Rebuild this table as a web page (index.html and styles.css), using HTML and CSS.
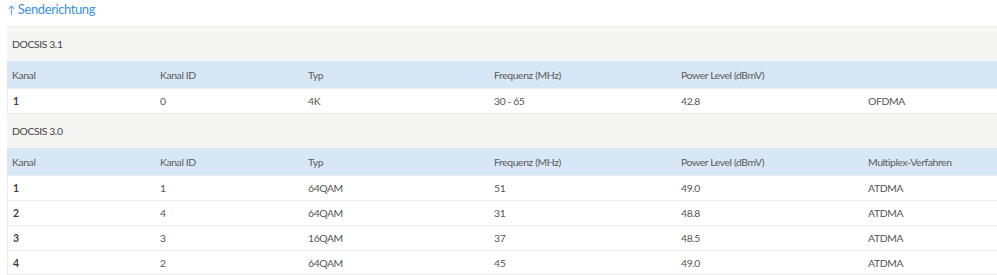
FILE: index.html
```html
<!DOCTYPE html>
<html lang="de">
<head>
<meta charset="utf-8">
<title>Senderichtung</title>
<link rel="stylesheet" href="styles.css">
</head>
<body>
<h2 class="section-title"><span class="arrow">↑</span>Senderichtung</h2>
<table class="channels">
  <colgroup>
    <col class="c1"><col class="c2"><col class="c3"><col class="c4"><col class="c5"><col class="c6">
  </colgroup>
  <tbody>
    <tr class="group"><td colspan="6">DOCSIS 3.1</td></tr>
    <tr class="head"><td>Kanal</td><td>Kanal ID</td><td>Typ</td><td>Frequenz (MHz)</td><td>Power Level (dBmV)</td><td></td></tr>
    <tr class="row"><td class="num">1</td><td>0</td><td>4K</td><td>30 - 65</td><td>42.8</td><td>OFDMA</td></tr>
    <tr class="group"><td colspan="6">DOCSIS 3.0</td></tr>
    <tr class="head"><td>Kanal</td><td>Kanal ID</td><td>Typ</td><td>Frequenz (MHz)</td><td>Power Level (dBmV)</td><td>Multiplex-Verfahren</td></tr>
    <tr class="row"><td class="num">1</td><td>1</td><td>64QAM</td><td>51</td><td>49.0</td><td>ATDMA</td></tr>
    <tr class="row"><td class="num">2</td><td>4</td><td>64QAM</td><td>31</td><td>48.8</td><td>ATDMA</td></tr>
    <tr class="row"><td class="num">3</td><td>3</td><td>16QAM</td><td>37</td><td>48.5</td><td>ATDMA</td></tr>
    <tr class="row"><td class="num">4</td><td>2</td><td>64QAM</td><td>45</td><td>49.0</td><td>ATDMA</td></tr>
  </tbody>
</table>
</body>
</html>
```
FILE: styles.css
```css
html, body {
  margin: 0;
  padding: 0;
  background: #ffffff;
}
body {
  font-family: Lato, "Liberation Sans", sans-serif;
  color: #555555;
  overflow: hidden;
}
.section-title {
  margin: 0;
  padding: 0 0 0 7px;
  height: 26px;
  box-sizing: border-box;
  font-family: Lato, Roboto, sans-serif;
  font-size: 13px;
  font-weight: normal;
  color: #3d8fe0;
  line-height: 18px;
  letter-spacing: -0.4px;
}
.section-title .arrow {
  display: inline-block;
  margin-right: 3px;
  font-size: 11px;
}
.channels {
  margin-left: 7px;
  width: 990px;
  border-collapse: separate;
  border-spacing: 0;
  table-layout: fixed;
  font-size: 10.4px;
  letter-spacing: -0.4px;
}
.c1 { width: 148px; }
.c2 { width: 148px; }
.c3 { width: 186px; }
.c4 { width: 187px; }
.c5 { width: 187px; }
.c6 { width: 134px; }
.channels td {
  box-sizing: border-box;
  padding: 0 0 0 5px;
  white-space: nowrap;
  overflow: hidden;
  vertical-align: middle;
}
.group td {
  height: 35px;
  background: #f5f5f3;
  color: #444444;
  border-top: 1px solid #ededeb;
}
.head td {
  height: 27px;
  background: #d7e7f5;
  color: #5a5a5a;
}
.row td {
  height: 25px;
  border-top: 1px solid #ececec;
  color: #555555;
}
.row td:first-child {
  border-left: 1px solid #ececec;
}
.row:last-child td {
  border-bottom: 1px solid #ececec;
}
.row .num {
  font-weight: bold;
  color: #3d3d3d;
}
```
